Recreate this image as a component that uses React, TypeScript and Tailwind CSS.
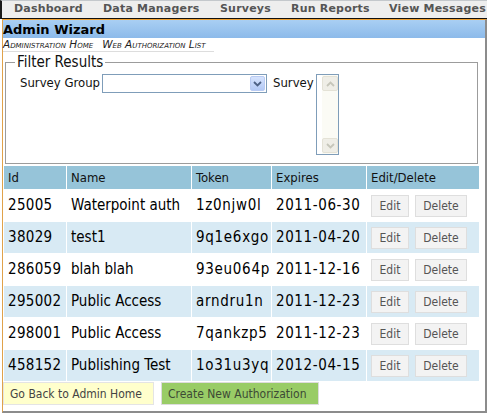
import React from "react";

const cond = "font-['DejaVu_Sans_Condensed','DejaVu_Sans',sans-serif] font-stretch-condensed";
const verd = "font-['DejaVu_Sans','Verdana',sans-serif]";

const rows = [
  ["25005", "Waterpoint auth", "1z0njw0l", "2011-06-30"],
  ["38029", "test1", "9q1e6xgo", "2011-04-20"],
  ["286059", "blah blah", "93eu064p", "2011-12-16"],
  ["295002", "Public Access", "arndru1n", "2011-12-23"],
  ["298001", "Public Access", "7qankzp5", "2011-12-23"],
  ["458152", "Publishing Test", "1o31u3yq", "2012-04-15"],
];

function Chevron({ up, color }: { up?: boolean; color: string }) {
  return (
    <svg width="9" height="6" viewBox="0 0 9 6">
      <path
        d={up ? "M1 5 L4.5 1.5 L8 5" : "M1 1 L4.5 4.5 L8 1"}
        fill="none"
        stroke={color}
        strokeWidth="1.8"
      />
    </svg>
  );
}

export default function App() {
  return (
    <div className="w-[487px] h-[413px] bg-white overflow-hidden text-black">
      {/* top nav */}
      <div
        className={`h-[19px] flex items-center border-l-2 border-l-[#1a1a1a] border-t border-t-[#c4c8cc] border-b border-b-[#111] bg-[#eeeeee] pl-[12px] text-[11px] font-bold text-[#555] tracking-[0.2px] whitespace-nowrap ${verd}`}
      >
        <span className="w-[89px]">Dashboard</span>
        <span className="w-[117px]">Data Managers</span>
        <span className="w-[71px]">Surveys</span>
        <span className="w-[98px]">Run Reports</span>
        <span>View Messages</span>
      </div>

      <div className="ml-[2px] h-[394px] border-l border-l-[#e0a24a] border-t border-t-[#f0a030] border-r-2 border-r-[#8c8c8c] border-b-2 border-b-[#8c8c8c] flex flex-col">
        {/* header */}
        <div
          className={`h-[18px] flex items-center bg-gradient-to-b from-[#a9cff3] to-[#8cbaea] text-[13px] font-bold leading-none ${verd}`}
        >
          Admin Wizard
        </div>

        {/* breadcrumb */}
        <div className="flex">
          <div
            className={`h-[14px] flex items-center gap-[9px] pr-[8px] border-b border-b-[#dddddd] text-[10.5px] italic text-[#222] [font-variant-caps:small-caps] leading-none ${verd}`}
          >
            <span>Administration Home</span>
            <span>Web Authorization List</span>
          </div>
        </div>

        {/* fieldset */}
        <fieldset className={`ml-[2px] mt-[1px] w-[473px] border border-[#9c9c9c] pb-[8px] ${cond}`}>
          <legend className="ml-[9px] px-[2px] text-[15px] leading-[18px] text-[#111]">
            Filter Results
          </legend>
          <div className="flex items-start pt-[3px] pl-[14px] text-[13px] text-[#111]">
            <span className="leading-[18px] w-[82px]">Survey Group</span>
            <div className="w-[165px] h-[19px] border border-[#7f9db9] bg-white flex justify-end p-[1px]">
              <div className="w-[15px] h-[15px] rounded-[2px] border border-[#b9cbf3] bg-gradient-to-b from-[#d6e3fd] to-[#b3c9f5] flex items-center justify-center">
                <Chevron color="#4d6185" />
              </div>
            </div>
            <span className="leading-[18px] ml-[6px] w-[43px]">Survey</span>
            <div className="w-[23px] h-[81px] border border-[#7f9db9] bg-white flex">
              <div className="w-[5px]" />
              <div className="w-[16px] flex flex-col bg-[#fbfbf5] py-[1px]">
                <div className="h-[15px] rounded-[2px] border border-[#e4e2d6] bg-[#efeee7] flex items-center justify-center">
                  <Chevron up color="#c6c6ba" />
                </div>
                <div className="flex-1" />
                <div className="h-[15px] rounded-[2px] border border-[#e4e2d6] bg-[#efeee7] flex items-center justify-center">
                  <Chevron color="#c6c6ba" />
                </div>
              </div>
            </div>
          </div>
        </fieldset>

        {/* table */}
        <div className="ml-[1px] mt-[2px] grid grid-cols-[62px_124px_79px_94px_112px] gap-[1px] w-[475px]">
          {["Id", "Name", "Token", "Expires", "Edit/Delete"].map((h) => (
            <div
              key={h}
              className={`h-[23px] bg-[#96c4d9] pl-[4px] flex items-center text-[13px] text-[#111] ${cond}`}
            >
              {h}
            </div>
          ))}
          {rows.map((r, i) => {
            const bg = i % 2 === 1 ? "bg-[#d8eaf4]" : "bg-white";
            return (
              <React.Fragment key={r[0]}>
                <div className={`h-[31px] ${bg} pl-[4px] flex items-center text-[15px] tracking-[0.3px] ${cond}`}>{r[0]}</div>
                <div className={`h-[31px] ${bg} pl-[4px] flex items-center text-[15px] whitespace-nowrap ${cond}`}>{r[1]}</div>
                <div className={`h-[31px] ${bg} pl-[4px] flex items-center text-[15px] tracking-[0.7px] whitespace-nowrap overflow-hidden ${cond}`}>{r[2]}</div>
                <div className={`h-[31px] ${bg} pl-[4px] flex items-center text-[15px] tracking-[0.6px] ${cond}`}>{r[3]}</div>
                <div className={`h-[31px] ${bg} pl-[4px] flex items-center gap-[6px]`}>
                  <div className={`w-[38px] h-[22px] bg-[#f3f3f3] border border-[#dedede] flex items-center justify-center text-[12px] text-[#555] ${cond}`}>
                    Edit
                  </div>
                  <div className={`w-[52px] h-[22px] bg-[#f3f3f3] border border-[#dedede] flex items-center justify-center text-[12px] text-[#555] ${cond}`}>
                    Delete
                  </div>
                </div>
              </React.Fragment>
            );
          })}
        </div>

        {/* bottom buttons */}
        <div className="mt-[1px] flex gap-[7px]">
          <div className={`w-[151px] h-[23px] bg-[#ffffcc] border border-[#e4e4e4] flex items-center pl-[6px] text-[12px] text-[#444] ${cond}`}>
            Go Back to Admin Home
          </div>
          <div className={`w-[158px] h-[23px] bg-[#99cc66] border border-[#dcdcdc] flex items-center pl-[6px] text-[12px] text-[#3d4a35] ${cond}`}>
            Create New Authorization
          </div>
        </div>
      </div>
    </div>
  );
}
